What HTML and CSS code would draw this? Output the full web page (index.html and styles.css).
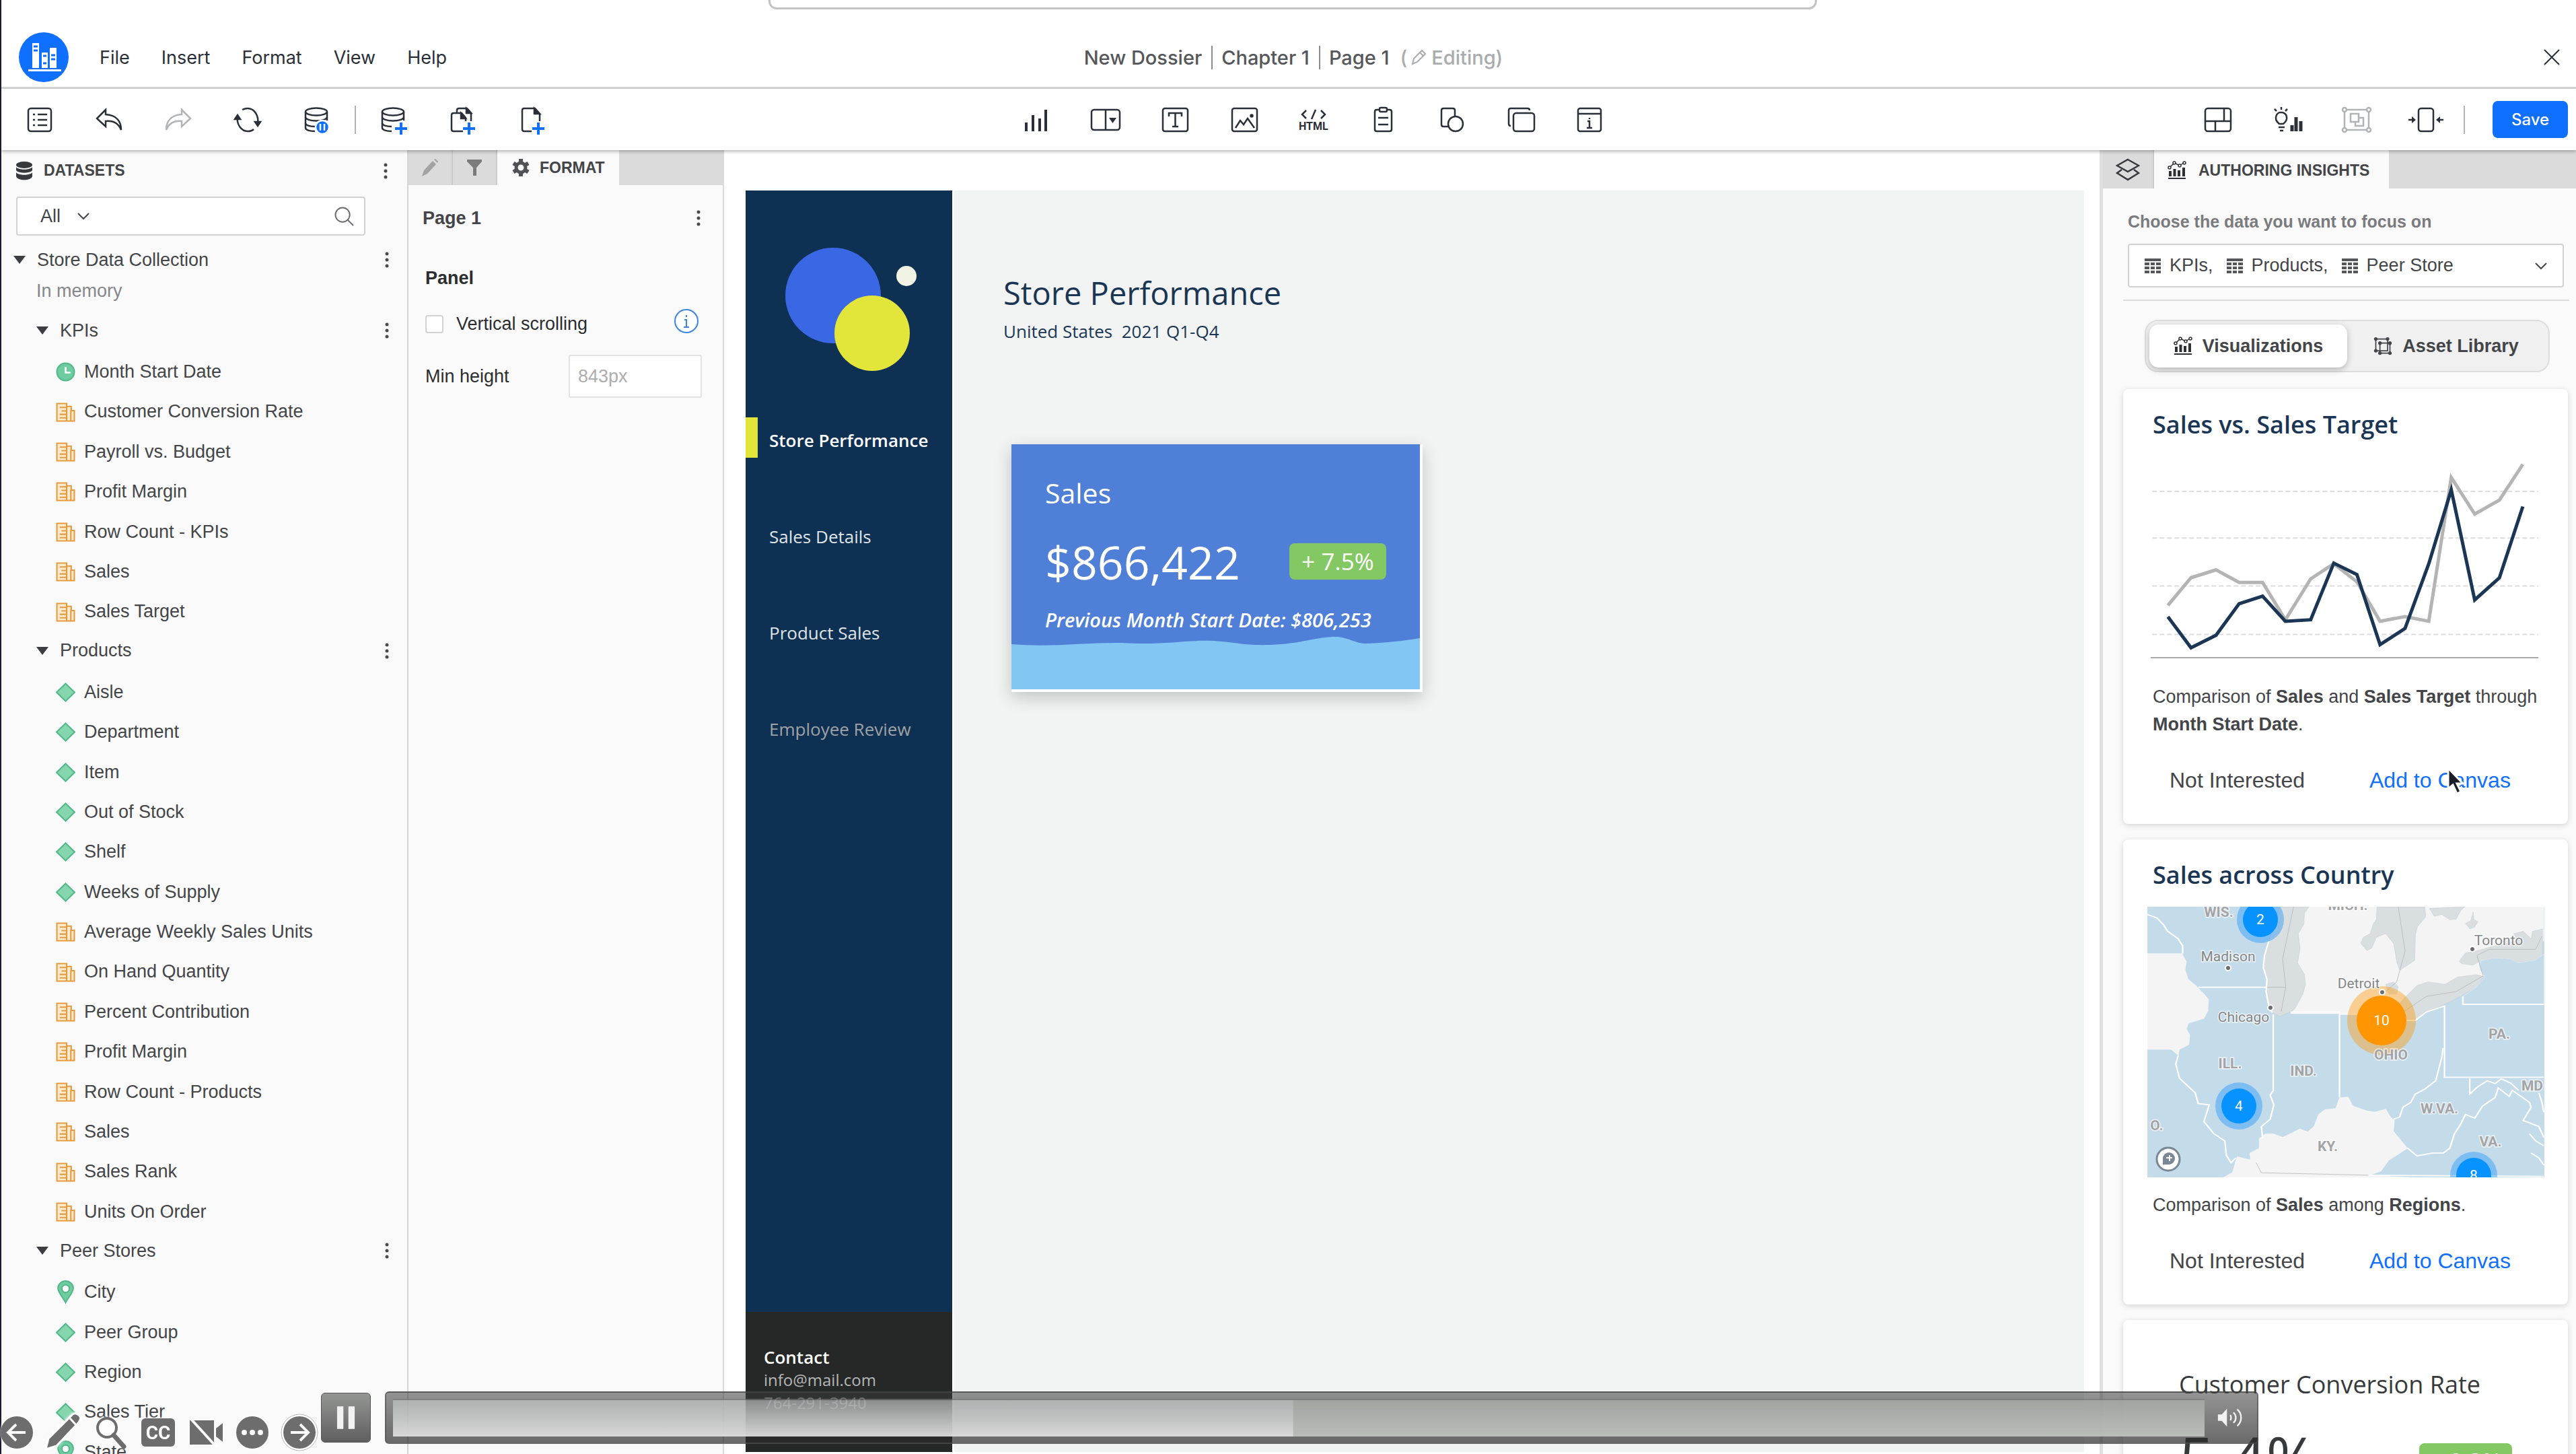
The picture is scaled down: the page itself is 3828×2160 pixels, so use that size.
FILE: index.html
```html
<!DOCTYPE html>
<html lang="en">
<head>
    <meta charset="UTF-8">
    <meta name="viewport" content="width=device-width, initial-scale=1.0">
    <title>New Dossier</title>
    <link rel="stylesheet" href="styles.css">
</head>
<body>
    <!-- shared icons -->
    <svg class="sprite" aria-hidden="true">
        <symbol id="i-metric" viewBox="0 0 28 28">
            <path d="M1.5 1.5h14v4h6.500v6h4.500v15h-25z" fill="#fcebd0" stroke="#e59b3c" stroke-width="2"/>
            <path d="M15.500 5v21M21.500 11v15M5.500 7h10M8 12h7.500M5.500 17h10M5.500 22h10" fill="none" stroke="#e59b3c" stroke-width="2"/>
        </symbol>
        <symbol id="i-attr" viewBox="0 0 28 28">
            <path d="M14 1.500 27 14 14 26.500 1 14z" fill="#85d5ae" stroke="#52b98a" stroke-width="2"/>
        </symbol>
        <symbol id="i-time" viewBox="0 0 28 28">
            <circle cx="14" cy="14" r="12.500" fill="#6fcba0" stroke="#52b98a" stroke-width="2"/>
            <path d="M14 7v8h7" fill="none" stroke="#fff" stroke-width="2.500"/>
        </symbol>
        <symbol id="i-pin" viewBox="0 0 28 34">
            <path d="M14 32C10 24 3 18 3 11.500a11 10.500 0 0 1 22 0C25 18 18 24 14 32z" fill="#6fcba0" stroke="#52b98a" stroke-width="2"/>
            <circle cx="14" cy="12" r="5.500" fill="#fff" stroke="#52b98a" stroke-width="2"/>
        </symbol>
        <symbol id="i-tri" viewBox="0 0 18 12"><path d="M0 0h18L9 12z" fill="#3c3d40"/></symbol>
        <symbol id="i-dots" viewBox="0 0 6 24">
            <circle cx="3" cy="3" r="2.500"/><circle cx="3" cy="12" r="2.500"/><circle cx="3" cy="21" r="2.500"/>
        </symbol>
        <symbol id="i-chev" viewBox="0 0 20 12"><path d="M2 2l8 8 8-8" fill="none" stroke="currentColor" stroke-width="2"/></symbol>
        <symbol id="i-table" viewBox="0 0 24 22">
            <path d="M0 0h24v4H0zM0 6h7v4H0zM9 6h6v4H9zM17 6h7v4h-7zM0 12h7v4H0zM9 12h6v4H9zM17 12h7v4h-7zM0 18h7v4H0zM9 18h6v4H9zM17 18h7v4h-7z" fill="#555659"/>
        </symbol>
        <symbol id="i-insight" viewBox="0 0 28 28">
            <path d="M2 15h4v8H2zM8.500 12h4v11h-4zM15 14h4v9h-4zM22 10h4v13h-4zM1 25h26v2H1z" fill="#2f3033"/>
            <path d="M3 10l7-7 8 4 6-4" fill="none" stroke="#2f3033" stroke-width="1.500"/>
            <g fill="#fff" stroke="#2f3033" stroke-width="1.500"><circle cx="3" cy="10" r="2"/><circle cx="10" cy="3" r="2"/><circle cx="18" cy="7" r="2"/><circle cx="25" cy="3" r="2"/></g>
        </symbol>
        <symbol id="i-db" viewBox="0 0 44 44">
            <path d="M5 10v24c0 3 6 5 14 5M37 10v13" />
            <ellipse cx="21" cy="10" rx="16" ry="5.500"/>
            <path d="M5 18c0 3 7 5.500 16 5.500S37 21 37 18M5 27c0 3 6 5 14 5"/>
        </symbol>
    </svg>

    <div class="browser-bar"><div class="address"></div></div>

    <header class="header">
        <div class="header-left">
            <a class="logo" href="#" aria-label="Library">
                <svg viewBox="0 0 74 74">
                    <circle cx="37" cy="37" r="37" fill="#0f6fff"/>
                    <path d="M20 16h10v37H20zM34 30h9v23h-9zM46 23h10v30H46zM14 55h49v3H14z" fill="#fff"/>
                    <path d="M22 21h6M22 27h6M36 35h5M36 46h5M48 34h6M48 40h6" stroke="#0f6fff" stroke-width="3"/>
                </svg>
            </a>
            <nav class="menu">
                <button type="button">File</button>
                <button type="button">Insert</button>
                <button type="button">Format</button>
                <button type="button">View</button>
                <button type="button">Help</button>
            </nav>
        </div>
        <div class="crumbs">
            <span>New Dossier</span>
            <span class="crumb">Chapter 1</span>
            <span class="crumb">Page 1</span>
            <span class="editing">(<svg viewBox="0 0 24 24"><path d="M2 22l2-8L16 2l5 5L9 19zM13 5l5 5"/></svg>Editing)</span>
        </div>
        <button type="button" class="close" aria-label="Close"><svg viewBox="0 0 24 24"><path d="M1 1l22 22M23 1L1 23"/></svg></button>
    </header>

    <div class="toolbar">
        <div class="tools">
            <button type="button" aria-label="Contents"><svg viewBox="0 0 44 44"><rect x="5" y="5" width="34" height="34" rx="4"/><path d="M12 14h3M12 22h3M12 30h3M19 14h14M19 22h14M19 30h14"/></svg></button>
            <button type="button" aria-label="Undo"><svg viewBox="0 0 44 44"><path d="M17 7 4 20l13 12v-8c11-1 19 3 23 13 0-13-7-22-23-23z"/></svg></button>
            <button type="button" class="off" aria-label="Redo"><svg viewBox="0 0 44 44"><path d="M27 7l13 13-13 12v-8C16 23 8 27 4 37c0-13 7-22 23-23z"/></svg></button>
            <button type="button" aria-label="Refresh"><svg viewBox="0 0 44 44"><path d="M7 17c-2 12 6 22 15 22 4 0 7-1 9-3M37 28C39 16 32 5 22 5c-4 0-6 1-8 2"/><path d="M3 21l4-6 4 6zM33 25l4 6 4-6z" fill="#2b2f38"/></svg></button>
            <button type="button" aria-label="Pause data retrieval"><svg viewBox="0 0 44 44"><use href="#i-db"/><circle cx="30" cy="33" r="10" fill="#0f6fff" stroke="#fff"/><path d="M27 28v10M33 28v10" stroke="#fff"/></svg></button>
            <span class="tool-sep"></span>
            <button type="button" aria-label="Add data"><svg viewBox="0 0 44 44"><use href="#i-db"/><path class="plus" d="M24 35h18M33 26v18"/></svg></button>
            <button type="button" aria-label="Add chapter"><svg viewBox="0 0 44 44"><path d="M13 11V8c0-2 1-3 3-3h12l6 7v12M22 39H8c-2 0-3-1-3-3V15c0-2 1-3 3-3h12l6 7v5"/><path d="M27 5v7h7zM19 12v8h7z" fill="#2b2f38"/><path class="plus" d="M22 35h18M31 26v18"/></svg></button>
            <button type="button" aria-label="Add page"><svg viewBox="0 0 44 44"><path d="M21 39H10c-2 0-3-1-3-3V8c0-2 1-3 3-3h16l7 8v11"/><path d="M25 5v8h8z" fill="#2b2f38"/><path class="plus" d="M22 35h18M31 26v18"/></svg></button>
        </div>
        <div class="tools tools-mid">
            <button type="button" aria-label="Visualization"><svg viewBox="0 0 44 44"><path d="M7 26v13M17 15v24M27 20v19M36 7v32" stroke-width="4"/></svg></button>
            <button type="button" aria-label="Filter"><svg viewBox="0 0 44 44"><rect x="1" y="7" width="42" height="30" rx="4"/><path d="M22 7v30"/><path d="M27 19h11l-5.500 8z" fill="#2b2f38" stroke="none"/></svg></button>
            <button type="button" aria-label="Text"><svg viewBox="0 0 44 44"><rect x="4" y="5" width="37" height="34" rx="3"/><path d="M13 17v-5h19v5M22.500 12v20M18 32h9"/></svg></button>
            <button type="button" aria-label="Image"><svg viewBox="0 0 44 44"><rect x="4" y="5" width="37" height="34" rx="3"/><path d="M9 34l7-11 5 6 6-9 10 14"/><circle cx="33" cy="16" r="1.500" fill="#2b2f38"/></svg></button>
            <button type="button" class="html" aria-label="HTML"><svg viewBox="0 0 44 20"><path d="M11 4 5 10l6 6M33 4l6 6-6 6M25 3l-6 14"/></svg><span>HTML</span></button>
            <button type="button" aria-label="Notes"><svg viewBox="0 0 44 44"><path d="M16 7h-3c-2 0-3 1-3 3v26c0 2 1 3 3 3h19c2 0 3-1 3-3V10c0-2-1-3-3-3h-3"/><rect x="17" y="4" width="11" height="6" rx="2"/><path d="M15 19h15M15 29h15"/></svg></button>
            <button type="button" aria-label="Shape"><svg viewBox="0 0 44 44"><path d="M18 32h-9c-2 0-3-1-3-3V8c0-2 1-3 3-3h14c2 0 3 1 3 3v8"/><circle cx="27" cy="28" r="11"/></svg></button>
            <button type="button" aria-label="Panel stack"><svg viewBox="0 0 44 44"><path d="M6 31c-2 0-3-1-3-3V8c0-2 1-3 3-3h25c2 0 3 1 3 3"/><rect x="10" y="12" width="31" height="27" rx="4"/></svg></button>
            <button type="button" aria-label="Information window"><svg viewBox="0 0 44 44"><rect x="3" y="5" width="34" height="34" rx="3"/><path d="M3 13h34M20 19v2M17 24h3v10M16 34h8"/></svg></button>
        </div>
        <div class="tools tools-right">
            <button type="button" aria-label="Layout"><svg viewBox="0 0 44 44"><rect x="3" y="5" width="38" height="34" rx="4"/><path d="M3 24h38M31 5v19M18 24v15"/></svg></button>
            <button type="button" aria-label="Insights"><svg viewBox="0 0 44 44"><path d="M10 28c-10-8-3-18 3-17 8 0 12 10 3 17zM9 33h9M11 38h5M13 3v4M3 6l3 3M22 6l-3 3"/><path d="M29 30v9M35 18v21M42 24v15" stroke-width="5"/></svg></button>
            <button type="button" class="off" aria-label="Group"><svg viewBox="0 0 44 44"><rect x="4" y="7" width="36" height="30"/><rect x="13" y="13" width="12" height="12"/><path d="M25 19h7v12H20v-6"/><g fill="#fff"><circle cx="4" cy="7" r="3"/><circle cx="40" cy="7" r="3"/><circle cx="4" cy="37" r="3"/><circle cx="40" cy="37" r="3"/></g></svg></button>
            <button type="button" class="wide" aria-label="Fit"><svg viewBox="0 0 56 44"><rect x="17" y="5" width="22" height="34" rx="4"/><path d="M2 22h8M54 22h-8"/><path d="M7 17v10l6-5zM49 17v10l-6-5z" fill="#2b2f38" stroke="none"/></svg></button>
            <span class="tool-sep"></span>
            <button type="button" class="save">Save</button>
        </div>
    </div>

    <div class="workspace">
        <aside class="datasets">
            <div class="panel-title">
                <svg class="db-solid" viewBox="0 0 26 28"><g fill="#38393c"><ellipse cx="13" cy="5" rx="12" ry="5"/><path d="M1 8c3 5 21 5 24 0v5c-3 5-21 5-24 0zM1 16c3 5 21 5 24 0v6c-2 7-22 7-24 0z"/></g></svg>
                <h2>DATASETS</h2>
                <button type="button" class="kebab" aria-label="Dataset options"><svg><use href="#i-dots"/></svg></button>
            </div>
            <div class="search">
                <select aria-label="Filter type"><option>All</option></select>
                <svg class="chev"><use href="#i-chev"/></svg>
                <input type="text" aria-label="Search datasets">
                <svg class="lens" viewBox="0 0 30 30"><circle cx="12.500" cy="12.500" r="11"/><path d="M20 20l9 9"/></svg>
            </div>

            <div class="tree">
                <div class="group top">
                    <svg class="tri"><use href="#i-tri"/></svg><span>Store Data Collection</span>
                    <button type="button" class="kebab" aria-label="Options"><svg><use href="#i-dots"/></svg></button>
                </div>
                <p class="memory">In memory</p>

                <div class="group">
                    <svg class="tri"><use href="#i-tri"/></svg><span>KPIs</span>
                    <button type="button" class="kebab" aria-label="Options"><svg><use href="#i-dots"/></svg></button>
                </div>
                <ul>
                    <li><svg><use href="#i-time"/></svg>Month Start Date</li>
                    <li><svg><use href="#i-metric"/></svg>Customer Conversion Rate</li>
                    <li><svg><use href="#i-metric"/></svg>Payroll vs. Budget</li>
                    <li><svg><use href="#i-metric"/></svg>Profit Margin</li>
                    <li><svg><use href="#i-metric"/></svg>Row Count - KPIs</li>
                    <li><svg><use href="#i-metric"/></svg>Sales</li>
                    <li><svg><use href="#i-metric"/></svg>Sales Target</li>
                </ul>

                <div class="group">
                    <svg class="tri"><use href="#i-tri"/></svg><span>Products</span>
                    <button type="button" class="kebab" aria-label="Options"><svg><use href="#i-dots"/></svg></button>
                </div>
                <ul>
                    <li><svg><use href="#i-attr"/></svg>Aisle</li>
                    <li><svg><use href="#i-attr"/></svg>Department</li>
                    <li><svg><use href="#i-attr"/></svg>Item</li>
                    <li><svg><use href="#i-attr"/></svg>Out of Stock</li>
                    <li><svg><use href="#i-attr"/></svg>Shelf</li>
                    <li><svg><use href="#i-attr"/></svg>Weeks of Supply</li>
                    <li><svg><use href="#i-metric"/></svg>Average Weekly Sales Units</li>
                    <li><svg><use href="#i-metric"/></svg>On Hand Quantity</li>
                    <li><svg><use href="#i-metric"/></svg>Percent Contribution</li>
                    <li><svg><use href="#i-metric"/></svg>Profit Margin</li>
                    <li><svg><use href="#i-metric"/></svg>Row Count - Products</li>
                    <li><svg><use href="#i-metric"/></svg>Sales</li>
                    <li><svg><use href="#i-metric"/></svg>Sales Rank</li>
                    <li><svg><use href="#i-metric"/></svg>Units On Order</li>
                </ul>

                <div class="group">
                    <svg class="tri"><use href="#i-tri"/></svg><span>Peer Stores</span>
                    <button type="button" class="kebab" aria-label="Options"><svg><use href="#i-dots"/></svg></button>
                </div>
                <ul>
                    <li><svg class="pin"><use href="#i-pin"/></svg>City</li>
                    <li><svg><use href="#i-attr"/></svg>Peer Group</li>
                    <li><svg><use href="#i-attr"/></svg>Region</li>
                    <li><svg><use href="#i-attr"/></svg>Sales Tier</li>
                    <li><svg class="pin"><use href="#i-pin"/></svg>State</li>
                </ul>
            </div>
        </aside>

        <aside class="format">
            <div class="tabs">
                <button type="button" class="tab" aria-label="Editor"><svg viewBox="0 0 28 28"><path d="M2 27l3-9L18 4l5 5L10 23zM20 2l2-1 4 4-1 2z" fill="#a2a2a2"/></svg></button>
                <button type="button" class="tab" aria-label="Filter"><svg viewBox="0 0 28 28"><path d="M3 2h22v3l-8 9v12h-5V14L3 5z" fill="#7b7b7b"/></svg></button>
                <button type="button" class="tab active"><svg viewBox="0 0 28 28"><path d="M14 1v26M3 7.500l22 13M3 20.500l22-13" stroke="#505155" stroke-width="6"/><circle cx="14" cy="14" r="7" fill="#fafafa" stroke="#505155" stroke-width="5"/></svg>FORMAT</button>
            </div>
            <div class="format-body">
                <div class="format-row page-row">
                    <h2>Page 1</h2>
                    <button type="button" class="kebab" aria-label="Page options"><svg><use href="#i-dots"/></svg></button>
                </div>
                <h3>Panel</h3>
                <div class="format-row">
                    <input type="checkbox" id="vscroll">
                    <label for="vscroll">Vertical scrolling</label>
                    <svg class="info" viewBox="0 0 38 38"><circle cx="19" cy="19" r="17" fill="#fff"/><path d="M19 10v3M16 17h3v11M15 28h8"/></svg>
                </div>
                <div class="format-row height-row">
                    <label for="minh">Min height</label>
                    <input type="text" id="minh" placeholder="843px">
                </div>
            </div>
        </aside>

        <main class="canvas">
            <div class="page">
                <nav class="page-nav">
                    <svg class="brand" viewBox="0 0 307 337">
                        <circle cx="130" cy="156" r="71" fill="#3a68e4"/>
                        <circle cx="188" cy="212" r="56" fill="#e3e63a"/>
                        <circle cx="239" cy="127" r="15" fill="#f0f2e4"/>
                    </svg>
                    <a href="#" class="current">Store Performance</a>
                    <a href="#">Sales Details</a>
                    <a href="#">Product Sales</a>
                    <a href="#" class="dim">Employee Review</a>
                    <div class="contact">
                        <strong>Contact</strong>
                        <span>info@mail.com</span>
                        <span>764-291-3940</span>
                    </div>
                </nav>
                <section class="page-body">
                    <h1>Store Performance</h1>
                    <p class="subtitle">United States&nbsp; 2021 Q1-Q4</p>
                    <article class="kpi">
                        <h2>Sales</h2>
                        <div class="kpi-row"><span class="kpi-value">$866,422</span><span class="badge">+ 7.5%</span></div>
                        <p>Previous Month Start Date: $806,253</p>
                        <svg class="wave" viewBox="0 0 607 76" preserveAspectRatio="none"><path d="M0 9C60 14 110 6 165 7c60 4 95-5 135-3 40 3 45 7 85 6 50-2 70-13 100-12 18 2 26 10 42 10 30-1 55-4 80-8v76H0z" fill="#82c6f4"/></svg>
                    </article>
                </section>
            </div>
        </main>

        <aside class="insights">
            <div class="tabs">
                <button type="button" class="tab" aria-label="Layers"><svg class="layers" viewBox="0 0 36 36"><path d="M18 2l16 9-16 9-16-9zM9 17l-7 5 16 10 16-10-7-5"/></svg></button>
                <button type="button" class="tab active"><svg><use href="#i-insight"/></svg>AUTHORING INSIGHTS</button>
            </div>
            <div class="focus">
                <label for="focus">Choose the data you want to focus on</label>
                <button type="button" id="focus" class="picker" aria-haspopup="listbox">
                    <svg><use href="#i-table"/></svg><span>KPIs,</span>
                    <svg><use href="#i-table"/></svg><span>Products,</span>
                    <svg><use href="#i-table"/></svg><span>Peer Store</span>
                    <svg class="chev"><use href="#i-chev"/></svg>
                </button>
            </div>
            <div class="switch">
                <button type="button" class="on"><svg><use href="#i-insight"/></svg>Visualizations</button>
                <button type="button"><svg viewBox="0 0 32 32"><path d="M4 4h20v20H4zM11 11h17v17H11z" fill="none" stroke="#444548" stroke-width="2"/><g fill="#444548"><circle cx="4" cy="4" r="3"/><circle cx="24" cy="4" r="3"/><circle cx="4" cy="24" r="3"/><circle cx="11" cy="11" r="3"/><circle cx="28" cy="11" r="3"/><circle cx="11" cy="28" r="3"/><circle cx="28" cy="28" r="3"/></g></svg>Asset Library</button>
            </div>

            <article class="card">
                <h3>Sales vs. Sales Target</h3>
                <svg class="chart" viewBox="0 0 576 300">
                    <g transform="scale(.4643 .4337) translate(-207 -277)" fill="none">
                        <path class="grid" d="M212 392H1448M212 552H1448M212 716H1448M212 882H1448"/>
                        <path class="axis" d="M207 962H1448"/>
                        <polyline class="target" points="262,783 336,688 416,661 490,704 565,704 638,832 719,692 793,640 867,702 941,837 1021,821 1097,837 1169,345 1244,470 1323,422 1398,300"/>
                        <polyline class="sales" points="262,822 336,928 416,885 490,777 565,751 638,837 719,832 793,638 867,677 941,917 1021,862 1097,640 1169,387 1244,764 1323,688 1398,444"/>
                    </g>
                </svg>
                <p>Comparison of <b>Sales</b> and <b>Sales Target</b> through <b>Month Start Date</b>.</p>
                <div class="actions">
                    <button type="button">Not Interested</button>
                    <button type="button" class="add">Add to Canvas</button>
                </div>
                <svg class="cursor" viewBox="0 0 28 44"><path d="M4 3v31l7-6 6 13 6-3-6-12h9z" fill="#1b1c26" stroke="#fff" stroke-width="3"/></svg>
            </article>

            <article class="card">
                <h3>Sales across Country</h3>
                <svg class="map" viewBox="0 0 590 402">
                    <rect width="590" height="402" fill="#c4dbe9"/>
                    <g transform="scale(.4643 .358) translate(-197 -328)">
                        <g class="land">
                            <path d="M197 522H308L322 555 318 590 328 630 352 655 378 690 393 712 391 760 378 792 328 812 322 835 333 860 330 900 300 920 296 945 274 920H197z"/>
                            <path d="M700 328H1466V470L1250 520 1262 590 1275 615 1160 655 1040 700 1000 735 880 772H655L670 750 703 650 678 560 686 500 680 440z"/>
                            <path d="M555 1290L575 1270 600 1270 630 1285 655 1270 685 1250 710 1262 730 1240 745 1190 765 1170 800 1165 812 1120 840 1118 855 1155 900 1175 925 1180 960 1168 975 1200 988 1215 985 1260 1030 1330 970 1380 945 1425 905 1443 1060 1452H440L470 1430 478 1390 485 1365 527 1378 525 1350 555 1330z"/>
                        </g>
                        <g class="water">
                            <path d="M586 470L620 328H714L700 355 698 400 680 440 686 500 678 560 700 610 703 650 695 690 670 750 655 765 620 783 597 768 585 735 577 680 580 630 568 580 572 530z"/>
                            <path d="M932 328H1085L1088 370 1062 410 1055 445 1053 550 1030 570 1005 592 996 560 985 480 960 440 930 455 915 500 900 510 880 480 888 455 910 440 920 400 930 380z"/>
                            <path d="M1100 335L1213 328 1200 345 1185 380 1165 382 1140 360 1115 368zM1240 350L1242 380 1255 390 1245 412 1230 420 1215 398 1232 385z"/>
                            <path d="M1195 555L1215 520 1240 515 1310 490 1380 470 1370 440 1400 430 1425 460 1430 430 1462 420V530L1440 550 1382 558 1360 545 1310 540 1262 552 1240 570 1205 565z"/>
                            <path d="M960 650L985 640 1000 660 995 690 970 690zM1000 735L1025 700 1060 655 1095 640 1150 650 1190 620 1250 610 1275 618 1250 660 1200 700 1130 745 1090 765 1055 800 1025 800 990 780z"/>
                        </g>
                        <path d="M1262 552L1310 540 1360 545 1382 560 1440 550 1466 525V733H1207V700L1250 660 1277 620 1262 590z" fill="#c4dbe9" stroke="#fff"/>
                        <path class="line" d="M1000 328L1022 512 995 640 960 680M1022 760L1090 700 1185 680 1272 615 1252 530 1290 505H1440L1460 450M665 328L630 545 640 660 625 765M580 662H640M545 1390L562 1432 905 1442"/>
                        <g class="state">
                            <path d="M197 360L228 375 250 405 262 430 295 460 310 490V522M360 662H580M586 470L572 530 568 580 580 630 577 680 585 735 597 768"/>
                            <path d="M600 775V1090L590 1110 602 1150 590 1210 562 1240 566 1290M655 765H812V1118M812 774H880M1025 800H1055L1090 765 1148 740V1036H1466M1207 700V733H1466"/>
                            <path d="M1143 915L1140 950 1120 1050 1085 1085 1055 1105 1040 1140 1015 1160 1005 1200 985 1210"/>
                            <path d="M296 945L288 980 300 1040 350 1100 360 1145 395 1150 378 1220 410 1270 445 1300 450 1360 465 1390 480 1370"/>
                            <path d="M1030 1330L1060 1362 1110 1350 1145 1350 1165 1330 1180 1270 1200 1230 1215 1190 1245 1205 1270 1155 1310 1120 1320 1080 1355 1115 1365 1090 1420 1140 1425 1160 1400 1215 1450 1240 1466 1285"/>
                            <path d="M1229 1040V1105L1255 1075 1285 1050 1310 1062 1330 1042 1360 1060 1385 1090M1450 1100L1460 1140 1466 1180M1420 1270L1440 1300 1466 1320M1425 1350L1450 1370 1466 1400M905 1442L1466 1447"/>
                        </g>
                    </g>
                    <g class="halo">
                        <circle cx="168" cy="19" r="35"/><circle cx="136" cy="296" r="35"/><circle cx="485" cy="399" r="35"/>
                        <circle cx="348" cy="169" r="51" class="orange"/>
                    </g>
                    <g class="dot">
                        <circle cx="168" cy="19" r="26"/><circle cx="136" cy="296" r="26"/><circle cx="485" cy="399" r="26"/>
                        <circle cx="348" cy="169" r="37" class="orange"/>
                    </g>
                    <g class="names">
                        <text x="106" y="15">WIS.</text><text x="298" y="5">MICH.</text>
                        <text x="123" y="240">ILL.</text><text x="232" y="251">IND.</text>
                        <text x="362" y="227">OHIO</text><text x="523" y="196">PA.</text>
                        <text x="572" y="273">MD</text><text x="434" y="307">W.VA.</text>
                        <text x="510" y="356">VA.</text><text x="268" y="363">KY.</text>
                        <text x="14" y="332">O.</text>
                    </g>
                    <g class="cities">
                        <text x="120" y="81">Madison</text><circle cx="120" cy="91" r="4"/>
                        <text x="143" y="171">Chicago</text><circle cx="183" cy="150" r="4"/>
                        <text x="314" y="121">Detroit</text><circle cx="349" cy="127" r="4"/>
                        <text x="522" y="57">Toronto</text><circle cx="483" cy="63" r="4"/>
                    </g>
                    <g class="counts">
                        <text x="168" y="26">2</text><text x="136" y="303">4</text><text x="485" y="406">8</text><text x="348" y="176">10</text>
                    </g>
                    <circle cx="31" cy="375" r="17" fill="#fff" stroke="#7a8794" stroke-width="3"/>
                    <path d="M23 383v-9a9 9 0 1 1 9 9z" fill="#7a8794"/>
                    <path d="M33 369v9M28 373h9" stroke="#fff" stroke-width="2"/>
                </svg>
                <p>Comparison of <b>Sales</b> among <b>Regions</b>.</p>
                <div class="actions">
                    <button type="button">Not Interested</button>
                    <button type="button" class="add">Add to Canvas</button>
                </div>
            </article>

            <article class="card rate">
                <h3>Customer Conversion Rate</h3>
                <div class="rate-row"><span class="rate-value">5.4%</span><span class="badge">+ 2.3%</span></div>
            </article>
        </aside>
    </div>

    <!-- presenter tools -->
    <div class="presenter">
        <button type="button" aria-label="Previous"><svg viewBox="0 0 50 50"><circle cx="25" cy="25" r="24" fill="#6d6d6d"/><path d="M38 25H12M24 13 12 25l12 12" fill="none" stroke="#fff" stroke-width="4"/></svg></button>
        <button type="button" aria-label="Pen"><svg viewBox="0 0 50 50"><path d="M-2 50l4-16L36 0c3-4 7-4 11-1s3 7 0 11L14 45z" fill="#6d6d6d" stroke="#fff" stroke-width="3"/><path d="M34 4l9 10" stroke="#fff" stroke-width="3"/></svg></button>
        <button type="button" aria-label="Zoom"><svg viewBox="0 0 50 50"><circle cx="19" cy="18" r="14" fill="#fff" fill-opacity=".4" stroke="#6d6d6d" stroke-width="4"/><path d="M29 29l15 17" stroke="#6d6d6d" stroke-width="7" stroke-linecap="round"/></svg></button>
        <button type="button" class="cc" aria-label="Captions"><span>CC</span></button>
        <button type="button" aria-label="Camera off"><svg viewBox="0 0 50 50"><path d="M2 7h36v36H2zM51 11v28l-10-8V19z" fill="#6d6d6d"/><path d="M2 3l40 44" stroke="#fff" stroke-width="4"/></svg></button>
        <button type="button" aria-label="More"><svg viewBox="0 0 50 50"><circle cx="25" cy="25" r="24" fill="#6d6d6d"/><g fill="#fff"><circle cx="13" cy="25" r="4"/><circle cx="25" cy="25" r="4"/><circle cx="37" cy="25" r="4"/></g></svg></button>
        <button type="button" aria-label="Next"><svg viewBox="0 0 50 50"><circle cx="25" cy="25" r="27" fill="#fff" stroke="#b5b5b5"/><circle cx="25" cy="25" r="24" fill="#6d6d6d"/><path d="M12 25h26M26 13l12 12-12 12" fill="none" stroke="#fff" stroke-width="4"/></svg></button>
    </div>

    <!-- video player -->
    <div class="player">
        <button type="button" class="pause" aria-label="Pause"><svg viewBox="0 0 30 38"><path d="M1 1h10v36H1zM19 1h10v36H19z" fill="#f2f2f2"/></svg></button>
        <div class="timeline">
            <input type="range" min="0" max="100" value="50" aria-label="Seek">
            <button type="button" class="volume" aria-label="Volume"><svg viewBox="0 0 44 32"><path d="M2 11h6l8-9v28l-8-9H2z" fill="#f2f2f2"/><path d="M21 12c2 2 2 6 0 8M26 8c5 4 5 12 0 16M32 3c8 7 8 19 0 26" fill="none" stroke="#f2f2f2" stroke-width="2.500"/></svg></button>
        </div>
    </div>
</body>
</html>
```

FILE: styles.css
```css
* {
    box-sizing: border-box;
}
body {
    margin: 0;
    height: 100vh;
    display: flex;
    flex-direction: column;
    overflow: hidden;
    border-left: 2px solid #1d1b2e;
    background: #fff;
    font-family: "Liberation Sans", Arial, sans-serif;
    font-size: 27px;
    color: #444548;
}
h1, h2, h3, p, ul {
    margin: 0;
    padding: 0;
}
button, input, select {
    font: inherit;
    color: inherit;
    border: none;
    background: none;
    padding: 0;
}
.sprite {
    position: absolute;
    width: 0;
    height: 0;
}

/* top of the window */
.browser-bar {
    height: 14px;
    flex: none;
}
.address {
    width: 1558px;
    height: 14px;
    margin: 0 auto;
    position: relative;
    left: 6px;
    border: 3px solid #c4c4c4;
    border-top: none;
    border-radius: 0 0 12px 12px;
}
.header {
    flex: none;
    display: grid;
    grid-template-columns: 1fr auto 1fr;
    align-items: center;
    height: 118px;
    padding: 27px 24px 0 26px;
    border-bottom: 3px solid #d5d6d7;
    font-family: Inter, "Liberation Sans", sans-serif;
}
.header-left {
    display: flex;
    align-items: center;
    gap: 46px;
}
.logo svg {
    display: block;
    width: 74px;
    height: 74px;
}
.menu {
    display: flex;
    gap: 47px;
    font-size: 27px;
    color: #2b2f38;
}
.crumbs {
    display: flex;
    align-items: center;
    font-size: 29px;
    font-weight: 500;
    color: #55565a;
    margin-left: 12px;
}
.crumb {
    margin-left: 14px;
    padding-left: 13px;
    border-left: 2px solid #8b8b8b;
}
.editing {
    display: flex;
    align-items: center;
    gap: 6px;
    margin-left: 16px;
    color: #a9abad;
}
.editing svg {
    width: 24px;
    height: 24px;
    fill: none;
    stroke: #a9abad;
    stroke-width: 2;
}
.close {
    justify-self: end;
}
.close svg {
    display: block;
    width: 24px;
    height: 24px;
    stroke: #2b2f38;
    stroke-width: 2;
}

/* toolbar */
.toolbar {
    flex: none;
    display: grid;
    grid-template-columns: 35fr 22fr 33fr;
    align-items: center;
    height: 91px;
    padding: 0 12px 0 5px;
    position: relative;
    z-index: 2;
    background: #fff;
    box-shadow: 0 2px 5px rgba(0, 0, 0, 0.3);
}
.tools {
    display: flex;
    align-items: center;
}
.tools-right {
    justify-content: flex-end;
}
.tools button {
    width: 103px;
    display: flex;
    justify-content: center;
}
.tools svg {
    width: 44px;
    height: 44px;
    fill: none;
    stroke: #2b2f38;
    stroke-width: 2.5;
    overflow: visible;
}
.tools .off svg {
    stroke: #b1b3b5;
}
.tools .wide svg {
    width: 56px;
}
.tools .plus {
    stroke: #0f6fff;
    stroke-width: 4;
}
.tools .html {
    flex-direction: column;
    align-items: center;
    font-family: Roboto, sans-serif;
    font-size: 16px;
    font-weight: 700;
    line-height: 16px;
    color: #2b2f38;
}
.tools .html svg {
    height: 20px;
}
.tool-sep {
    width: 11px;
    height: 42px;
    background: linear-gradient(#b3b3b3, #b3b3b3) center / 2px 100% no-repeat;
}
.tools .save {
    width: 112px;
    height: 55px;
    margin-left: 37px;
    align-items: center;
    border-radius: 8px;
    background: #0f6fff;
    color: #fff;
    font-family: Inter, sans-serif;
    font-size: 24px;
    font-weight: 500;
}

.workspace {
    flex: 1;
    min-height: 0;
    display: flex;
}
.kebab {
    margin-left: auto;
    width: 24px;
}
.kebab svg {
    display: block;
    margin: 0 auto;
    width: 6px;
    height: 24px;
    fill: #4a4b4e;
}
.chev {
    width: 20px;
    height: 12px;
}

/* datasets */
.datasets {
    flex: 0 0 605px;
    overflow: hidden;
    background: #fafafa;
    border-right: 2px solid #d4d4d4;
}
.panel-title {
    display: flex;
    align-items: center;
    height: 61px;
    padding: 0 20px 0 21px;
}
.panel-title h2 {
    font-size: 23px;
}
.db-solid {
    width: 26px;
    height: 28px;
    margin-right: 16px;
}
.search {
    display: flex;
    align-items: center;
    width: 519px;
    height: 58px;
    margin: 8px 0 0 22px;
    padding: 0 15px 0 34px;
    border: 2px solid #d2d2d2;
    border-radius: 4px;
    background: #fff;
}
.search select {
    appearance: none;
    width: 54px;
}
.search input {
    flex: 1;
    min-width: 0;
}
.lens {
    width: 29px;
    height: 29px;
    fill: none;
    stroke: #6b6c6f;
    stroke-width: 2;
}
.tree {
    padding-top: 8px;
}
.group {
    display: flex;
    align-items: center;
    height: 56px;
    margin-bottom: 4px;
    padding: 0 18px 0 52px;
}
.group.top {
    padding-left: 18px;
    margin: 0;
}
.tri {
    width: 18px;
    height: 12px;
    margin-right: 17px;
}
.memory {
    height: 49px;
    padding: 3px 0 0 52px;
    color: #86878a;
}
.tree ul {
    list-style: none;
    line-height: 2.2;
}
.tree li {
    display: flex;
    align-items: center;
    padding-left: 81px;
}
.tree li svg {
    width: 29px;
    height: 29px;
    margin-right: 13px;
}
.tree li .pin {
    height: 35px;
}

/* tabs on both side panels */
.tabs {
    display: flex;
    height: 52px;
    background: #dbdbdb;
}
.tab {
    display: flex;
    align-items: center;
    justify-content: center;
    width: 66px;
    border-right: 2px solid #cbcbcb;
    font-size: 23px;
    font-weight: bold;
}
.tab.active {
    width: auto;
    border: none;
    background: #fafafa;
}
.tab svg {
    width: 28px;
    height: 28px;
}

/* format */
.format {
    flex: 0 0 469px;
    background: #fafafa;
    border-right: 2px solid #dadada;
}
.format .active {
    gap: 14px;
    padding: 0 21px;
}
.format-body {
    padding: 2px 31px 0 25px;
    color: #2c2d2f;
}
.format h2, .format h3 {
    font-size: 27px;
}
.format h3 {
    margin-bottom: 33px;
}
.format-row {
    display: flex;
    align-items: center;
    height: 38px;
}
.page-row {
    height: 94px;
    margin: 0 -7px 27px -4px;
    color: #444548;
}
.format-row input[type="checkbox"] {
    appearance: none;
    width: 27px;
    height: 27px;
    margin: 0 19px 0 0;
    border: 2px solid #d2d2d2;
    border-radius: 4px;
    background: #fff;
}
.info {
    width: 38px;
    height: 38px;
    margin: 0 4px 8px auto;
    fill: none;
    stroke: #3b85e0;
    stroke-width: 2;
}
.height-row {
    height: 64px;
    margin-top: 27px;
    justify-content: space-between;
}
.height-row input {
    width: 198px;
    height: 64px;
    padding-left: 12px;
    border: 2px solid #e3e3e3;
    border-radius: 3px;
    background: #fff;
}
.height-row input::placeholder {
    color: #adadad;
}

/* canvas */
.canvas {
    flex: 1;
    min-width: 0;
    padding: 60px 23px 3px 32px;
    font-family: "Open Sans", "Noto Sans", sans-serif;
}
.page {
    display: flex;
    gap: 3px;
    height: 100%;
}
.page-nav {
    flex: 0 0 307px;
    display: flex;
    flex-direction: column;
    background: #0e3052;
    font-size: 26px;
}
.brand {
    width: 307px;
    height: 337px;
}
.page-nav a {
    height: 60px;
    margin-bottom: 83px;
    padding-left: 35px;
    line-height: 68px;
    color: #dfe3e6;
    text-decoration: none;
}
.page-nav .current {
    padding-left: 17px;
    border-left: 18px solid #e3e63a;
    color: #fff;
    font-weight: 600;
}
.page-nav .dim {
    color: #9ea2a6;
}
.contact {
    display: flex;
    flex-direction: column;
    height: 208px;
    margin-top: auto;
    padding: 50px 27px;
    background: #262827;
    color: #b5b6b6;
    font-size: 24px;
    line-height: 34px;
}
.contact strong {
    color: #fff;
    font-size: 26px;
    font-weight: 600;
}
.page-body {
    flex: 1;
    padding: 112px 73px;
    background: #f1f4f3;
    color: #1b3654;
}
.page-body h1 {
    font-size: 47px;
    font-weight: 400;
    line-height: 80px;
}
.subtitle {
    font-size: 26px;
    line-height: 34px;
}
.kpi {
    width: 611px;
    margin: 151px 0 0 12px;
    padding-left: 50px;
    border: solid #fff;
    border-width: 0 4px 4px 0;
    background: #507fd7;
    color: #fff;
    box-shadow: 0 8px 24px rgba(0, 0, 0, 0.2);
}
.kpi h2 {
    padding-top: 42px;
    font-size: 41px;
    font-weight: 400;
    line-height: 60px;
}
.kpi-row {
    display: flex;
    align-items: center;
    justify-content: space-between;
    height: 96px;
    margin-top: 24px;
    padding-right: 50px;
}
.kpi-value {
    font-size: 68px;
}
.badge {
    width: 144px;
    border-radius: 8px;
    background: #84c863;
    color: #fff;
    font-size: 35px;
    line-height: 54px;
    text-align: center;
}
.kpi p {
    font-size: 29px;
    font-weight: 600;
    font-style: italic;
    line-height: 36px;
    margin-top: 21px;
}
.wave {
    display: block;
    width: calc(100% + 50px);
    height: 76px;
    margin: 9px 0 0 -50px;
    overflow: visible;
}

/* insights */
.insights {
    flex: 0 0 708px;
    overflow: hidden;
    background: #fafafa;
    border-left: 5px solid #e0e0e0;
}
.insights .tabs {
    height: 57px;
}
.insights .tab {
    padding-top: 3px;
}
.insights .tab:not(.active) {
    width: 76px;
}
.insights .active {
    gap: 38px;
    padding: 3px 29px 0 20px;
}
.insights .active svg {
    margin-right: -20px;
}
.layers {
    fill: none;
    stroke: #38393c;
    stroke-width: 2.5;
}
.insights .layers {
    width: 36px;
    height: 36px;
}
.focus {
    margin: 0 10px 0 30px;
    padding: 30px 8px 18px 7px;
    border-bottom: 2px solid #dcdcdc;
}
.focus label {
    display: block;
    margin-bottom: 14px;
    font-size: 25px;
    font-weight: bold;
    line-height: 38px;
    color: #7a7b7e;
}
.picker {
    display: flex;
    align-items: center;
    width: 100%;
    height: 65px;
    padding: 0 22px 0 23px;
    border: 2px solid #d2d2d2;
    border-radius: 4px;
    background: #fff;
}
.picker svg {
    width: 24px;
    height: 22px;
}
.picker span {
    margin: 0 20px 0 13px;
}
.picker .chev {
    width: 20px;
    height: 12px;
    margin-left: auto;
}
.switch {
    display: flex;
    width: 602px;
    height: 78px;
    margin: 28px 0 25px 62px;
    padding: 5px;
    border: 2px solid #dddddd;
    border-radius: 20px;
    background: #f0f0f0;
}
.switch button {
    flex: 1;
    display: flex;
    align-items: center;
    justify-content: center;
    gap: 15px;
    border-radius: 14px;
    font-weight: bold;
}
.switch .on {
    background: #fff;
    box-shadow: 0 3px 10px rgba(0, 0, 0, 0.25);
}
.switch svg {
    width: 28px;
    height: 32px;
}
.card {
    position: relative;
    margin: 0 12px 23px 30px;
    padding: 29px 44px 35px;
    border-radius: 8px;
    background: #fff;
    box-shadow: 0 2px 8px rgba(0, 0, 0, 0.16);
}
.card h3 {
    font-family: "Open Sans", "Noto Sans", sans-serif;
    font-size: 36px;
    font-weight: 600;
    line-height: 48px;
    color: #1b3654;
}
.card p {
    line-height: 41px;
    margin-right: -20px;
}
.chart {
    display: block;
    width: 576px;
    height: 300px;
    margin: 25px -3px 35px;
}
.chart * {
    vector-effect: non-scaling-stroke;
}
.grid {
    stroke: #dcdcdc;
    stroke-width: 2;
    stroke-dasharray: 7 4;
}
.axis {
    stroke: #ababab;
    stroke-width: 2;
}
.target {
    stroke: #b4b4b4;
    stroke-width: 5;
}
.sales {
    stroke: #1b3654;
    stroke-width: 5;
}
.actions {
    display: flex;
    gap: 96px;
    margin-top: 32px;
    padding-left: 25px;
    font-size: 32px;
    line-height: 60px;
}
.actions .add {
    color: #0f6fff;
}
.cursor {
    position: absolute;
    right: 154px;
    bottom: 42px;
    width: 28px;
    height: 44px;
}

/* map */
.map {
    display: block;
    width: 590px;
    height: 402px;
    margin: 23px -8px 21px;
}
.land {
    fill: #f4f4f4;
    stroke: #fff;
}
.water {
    fill: #d9dee0;
    stroke: #bfc3c5;
}
.map .line {
    fill: none;
    stroke: #b5b7b9;
    stroke-width: 2;
}
.state {
    fill: none;
    stroke: #fff;
    stroke-width: 5;
}
.map text {
    text-anchor: middle;
    font-family: Roboto, sans-serif;
    font-size: 21px;
}
.names {
    fill: #a4a4a6;
    font-weight: 700;
}
.names text, .cities text {
    stroke: rgba(255, 255, 255, 0.7);
    stroke-width: 3;
    paint-order: stroke;
}
.cities {
    fill: #858688;
}
.cities circle {
    fill: #6c6d6f;
    stroke: #fff;
    stroke-width: 2;
}
.halo {
    fill: rgba(20, 145, 255, 0.4);
}
.halo .orange {
    fill: rgba(255, 150, 0, 0.4);
}
.dot {
    fill: #0793ff;
}
.dot .orange {
    fill: #ff9500;
}
.counts {
    fill: #fff;
}

.rate {
    padding: 72px 83px 60px;
}
.rate h3 {
    color: #38393b;
    font-size: 36px;
    font-weight: 400;
}
.rate-row {
    display: flex;
    justify-content: space-between;
    align-items: flex-start;
    margin-top: 29px;
    font-family: "Open Sans", "Noto Sans", sans-serif;
}
.rate-value {
    font-size: 92px;
    font-weight: 500;
    line-height: 112px;
    color: #38393b;
}
.rate-row .badge {
    width: 138px;
    margin-top: 34px;
}

/* overlays */
.presenter {
    position: fixed;
    left: 0;
    bottom: 7px;
    z-index: 5;
    display: flex;
    gap: 20px;
    filter: drop-shadow(0 0 2px #fff);
}
.presenter button {
    width: 50px;
    height: 50px;
}
.presenter svg {
    display: block;
    width: 50px;
    height: 50px;
    overflow: visible;
}
.presenter .cc {
    height: 42px;
    margin-top: 4px;
    border-radius: 6px;
    background: #6d6d6d;
    color: #fff;
    font-family: Roboto, sans-serif;
    font-size: 28px;
    font-weight: 700;
}
.player {
    position: fixed;
    left: 477px;
    right: 472px;
    bottom: 15px;
    z-index: 5;
    display: flex;
    align-items: center;
    gap: 21px;
}
.pause {
    width: 74px;
    height: 74px;
    border: 1px solid #555;
    border-radius: 6px;
    background: linear-gradient(#949694, #5f5f5f);
}
.pause svg {
    display: block;
    width: 28px;
    height: 36px;
    margin: 0 auto;
}
.timeline {
    flex: 1;
    display: flex;
    align-items: center;
    height: 78px;
    padding-left: 10px;
    border: 2px solid rgba(80, 80, 80, 0.6);
    border-radius: 6px;
    background: linear-gradient(rgba(60, 60, 60, 0.55), rgba(40, 40, 40, 0.69));
}
.timeline input {
    appearance: none;
    flex: 1;
    height: 56px;
    margin: 0;
    border-top: 2px solid rgba(120, 120, 120, 0.6);
    background:
        linear-gradient(rgba(200, 203, 203, 0.6), rgba(222, 222, 222, 0.95)) left / 49.7% 100% no-repeat,
        linear-gradient(rgba(168, 170, 168, 0.8), rgba(195, 197, 195, 0.9)) right / 50.3% 100% no-repeat;
}
.timeline input::-webkit-slider-thumb {
    appearance: none;
    width: 1px;
    height: 1px;
}
.volume {
    width: 78px;
}
.volume svg {
    display: block;
    width: 42px;
    height: 42px;
    margin: 0 auto;
}
```
